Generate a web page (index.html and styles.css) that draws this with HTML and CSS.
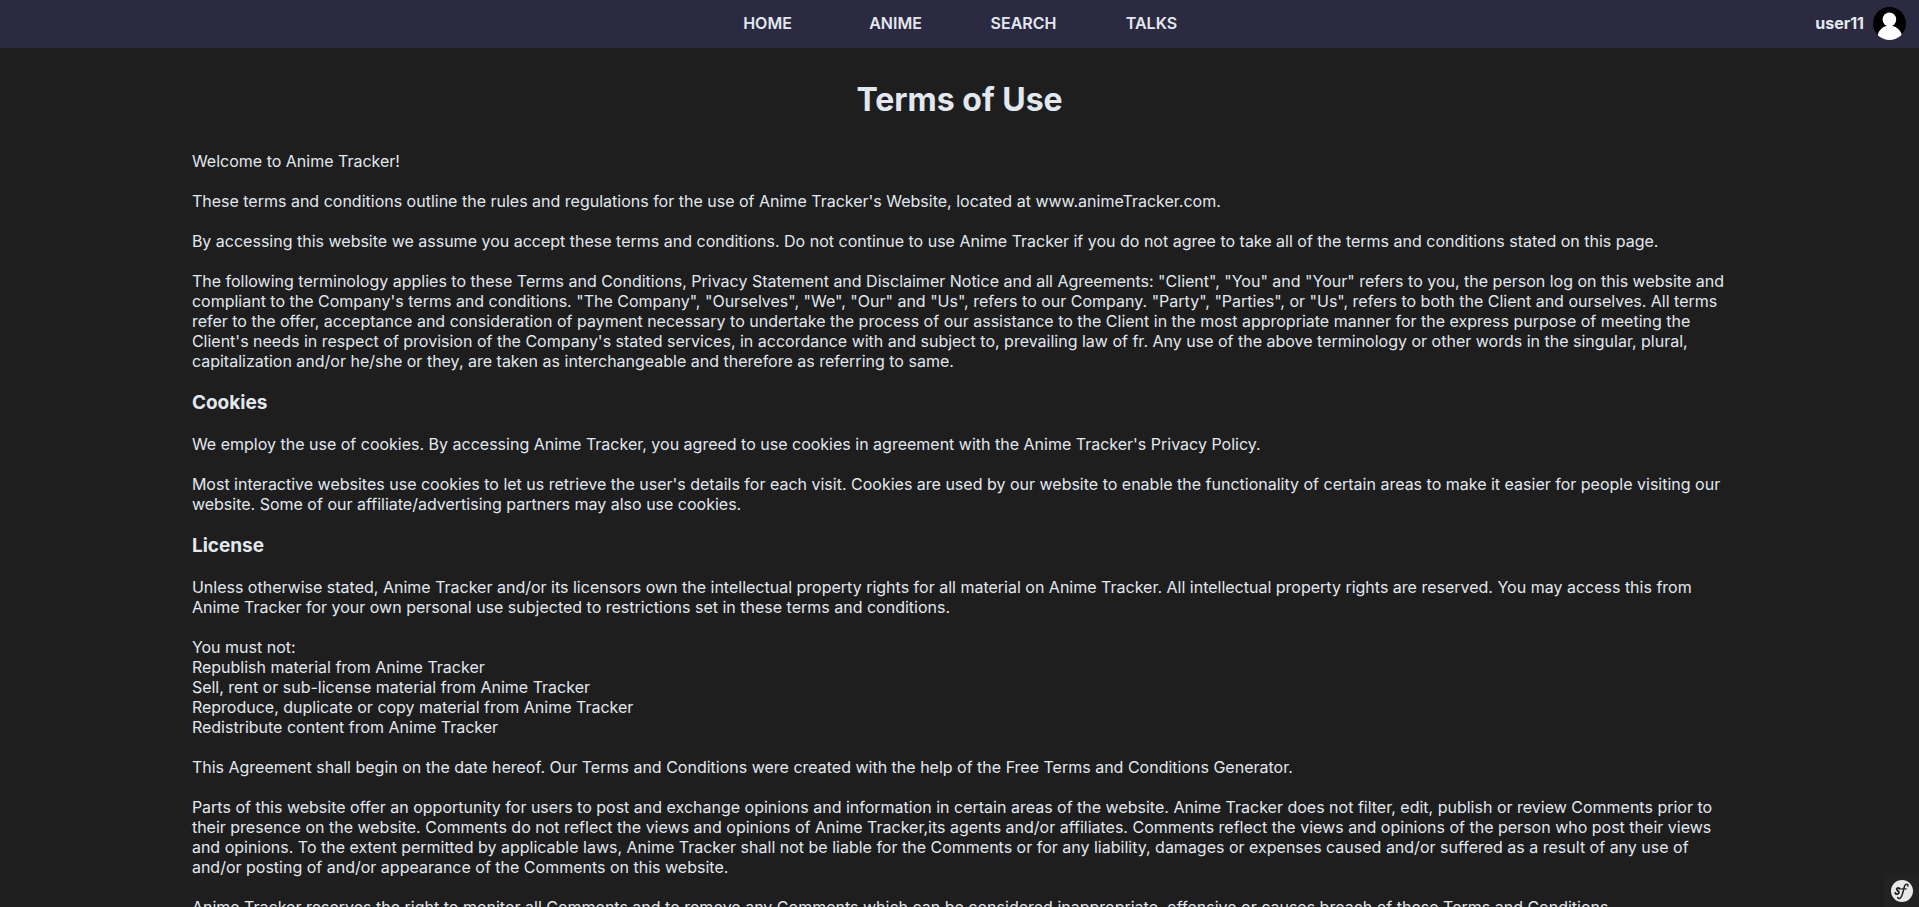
FILE: index.html
```html
<!DOCTYPE html>
<html lang="en">
<head>
<meta charset="utf-8">
<meta name="viewport" content="width=device-width, initial-scale=1">
<title>Terms of Use</title>
<link rel="stylesheet" href="styles.css">
</head>
<body>
<header class="topbar">
  <nav class="menu">
    <a href="#">HOME</a>
    <a href="#">ANIME</a>
    <a href="#">SEARCH</a>
    <a href="#">TALKS</a>
  </nav>
  <a class="account" href="#">
    <span>user11</span>
    <svg class="avatar" viewBox="0 0 33 33" aria-hidden="true">
      <defs><clipPath id="disc"><circle cx="16.500" cy="16.500" r="16.500"/></clipPath></defs>
      <g clip-path="url(#disc)">
        <rect width="33" height="33" fill="#000"/>
        <path d="M4.800 33V27.500C6 23 9.500 19.800 13.300 18.900H19.700C23.500 19.800 27.500 23 28.700 27.500V33Z" fill="#fff"/>
        <ellipse cx="16.400" cy="12.500" rx="6.800" ry="7" fill="#fff"/>
      </g>
    </svg>
  </a>
</header>
<main class="terms">
  <h1>Terms of Use</h1>
  <p>Welcome to Anime Tracker!</p>
  <p>These terms and conditions outline the rules and regulations for the use of Anime Tracker's Website, located at www.animeTracker.com.</p>
  <p>By accessing this website we assume you accept these terms and conditions. Do not continue to use Anime Tracker if you do not agree to take all of the terms and conditions stated on this page.</p>
  <p>The following terminology applies to these Terms and Conditions, Privacy Statement and Disclaimer Notice and all Agreements: "Client", "You" and "Your" refers to you, the person log on this website and compliant to the Company's terms and conditions. "The Company", "Ourselves", "We", "Our" and "Us", refers to our Company. "Party", "Parties", or "Us", refers to both the Client and ourselves. All terms refer to the offer, acceptance and consideration of payment necessary to undertake the process of our assistance to the Client in the most appropriate manner for the express purpose of meeting the Client's needs in respect of provision of the Company's stated services, in accordance with and subject to, prevailing law of fr. Any use of the above terminology or other words in the singular, plural, capitalization and/or he/she or they, are taken as interchangeable and therefore as referring to same.</p>
  <h3>Cookies</h3>
  <p>We employ the use of cookies. By accessing Anime Tracker, you agreed to use cookies in agreement with the Anime Tracker's Privacy Policy.</p>
  <p>Most interactive websites use cookies to let us retrieve the user's details for each visit. Cookies are used by our website to enable the functionality of certain areas to make it easier for people visiting our website. Some of our affiliate/advertising partners may also use cookies.</p>
  <h3>License</h3>
  <p>Unless otherwise stated, Anime Tracker and/or its licensors own the intellectual property rights for all material on Anime Tracker. All intellectual property rights are reserved. You may access this from Anime Tracker for your own personal use subjected to restrictions set in these terms and conditions.</p>
  <div class="rules">
    <p>You must not:</p>
    <ul>
      <li>Republish material from Anime Tracker</li>
      <li>Sell, rent or sub-license material from Anime Tracker</li>
      <li>Reproduce, duplicate or copy material from Anime Tracker</li>
      <li>Redistribute content from Anime Tracker</li>
    </ul>
  </div>
  <p>This Agreement shall begin on the date hereof. Our Terms and Conditions were created with the help of the Free Terms and Conditions Generator.</p>
  <p>Parts of this website offer an opportunity for users to post and exchange opinions and information in certain areas of the website. Anime Tracker does not filter, edit, publish or review Comments prior to their presence on the website. Comments do not reflect the views and opinions of Anime Tracker,its agents and/or affiliates. Comments reflect the views and opinions of the person who post their views and opinions. To the extent permitted by applicable laws, Anime Tracker shall not be liable for the Comments or for any liability, damages or expenses caused and/or suffered as a result of any use of and/or posting of and/or appearance of the Comments on this website.</p>
  <p>Anime Tracker reserves the right to monitor all Comments and to remove any Comments which can be considered inappropriate, offensive or causes breach of these Terms and Conditions.</p>
</main>
<button class="debug" type="button" aria-label="Open debug toolbar">
  <svg viewBox="0 0 22 22" aria-hidden="true">
    <circle cx="11" cy="11" r="11" fill="#e8e8e8"/>
    <g fill="none" stroke="#222" stroke-linecap="round">
      <path stroke-width="1.900" d="M8.900 8.900C8.300 7.500 5.700 7.700 5.700 9.200C5.700 10.600 8.300 10.900 8 12.700C7.700 14.500 4.600 14.500 4.300 13"/>
      <path stroke-width="1.500" d="M16.900 6.100C17.400 3.700 14.600 3.400 13.600 6.100C12.400 9.600 12 13.300 10.500 16.500C9.600 18.600 7.400 19.200 6.800 17.500"/>
      <path stroke-width="1.200" d="M10.600 8.900H15.200"/>
    </g>
  </svg>
</button>
</body>
</html>
```
FILE: styles.css
```css
* {
  box-sizing: border-box;
}

body {
  margin: 0;
  height: 100vh;
  overflow: hidden;
  background: #1e1e1e;
  color: #e2e8f0;
  font: 16px/20px Inter, sans-serif;
}

a {
  color: inherit;
  text-decoration: none;
}

.topbar {
  display: grid;
  grid-template-columns: 1fr auto 1fr;
  align-items: center;
  height: 48px;
  padding-bottom: 2px;
  background: #2c2a40;
  font-weight: 600;
}

.menu {
  grid-column: 2;
  display: grid;
  grid-template-columns: repeat(4, 128px);
  text-align: center;
}

.account {
  justify-self: end;
  display: flex;
  align-items: center;
  gap: 9px;
  padding-right: 13px;
  font-weight: 700;
}

.avatar {
  width: 33px;
  height: 33px;
}

.terms {
  padding: 32px 10%;
}

.terms h1 {
  margin: 0 0 32px;
  font-size: 32px;
  line-height: 39px;
  text-align: center;
}

.terms h3 {
  margin: 0 0 20px;
  font-size: 19px;
  line-height: 23px;
}

.terms p {
  margin: 0 0 20px;
}

.rules {
  margin-bottom: 20px;
}

.terms .rules p {
  margin: 0;
}

.rules ul {
  margin: 0;
  padding: 0;
  list-style: none;
}

.debug {
  position: fixed;
  right: 0;
  bottom: 0;
  display: grid;
  place-items: center;
  width: 35px;
  height: 34px;
  padding: 2px 0 0;
  border: 0;
  border-radius: 4px 0 0;
  background: #222;
}

.debug svg {
  width: 22px;
  height: 22px;
}
```
